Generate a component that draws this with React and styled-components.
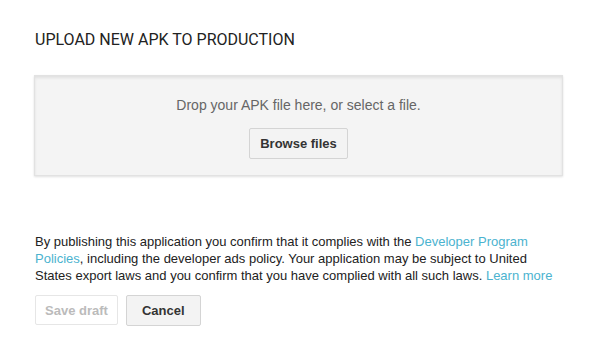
import styled, { createGlobalStyle } from "styled-components";

const GlobalStyle = createGlobalStyle`
  body {
    margin: 0;
    background: #fff;
    font-family: "Liberation Sans", Arial, sans-serif;
  }
`;

const Page = styled.div`
  width: 529px;
  padding: 30px 0 0 34px;
`;

const Title = styled.h2`
  margin: 0 0 26px 1px;
  font-family: Roboto, "Liberation Sans", sans-serif;
  font-weight: 400;
  font-size: 16px;
  line-height: 19px;
  color: #222;
`;

const DropZone = styled.div`
  height: 101px;
  box-sizing: border-box;
  background: #f4f4f4;
  border: 1px solid #e2e2e2;
  box-shadow: inset 0 2px 3px rgba(0, 0, 0, 0.08), 0 1px 2px rgba(0, 0, 0, 0.12);
  display: flex;
  flex-direction: column;
  align-items: center;
  padding-top: 21px;
  gap: 14px;
`;

const DropText = styled.div`
  font-size: 14px;
  line-height: 17px;
  color: #666;
`;

const Button = styled.button`
  height: ${(p) => p.h || 30}px;
  padding: 0 ${(p) => p.px || 10}px;
  font-family: "Liberation Sans", Arial, sans-serif;
  font-weight: 700;
  font-size: 13px;
  border-radius: 2px;
  color: ${(p) => (p.disabled ? "#bbb" : "#333")};
  background: ${(p) => (p.disabled ? "#fff" : "#f3f3f3")};
  border: 1px solid ${(p) => (p.disabled ? "#e6e6e6" : "#d4d4d4")};
  cursor: ${(p) => (p.disabled ? "default" : "pointer")};
`;

const Notice = styled.p`
  margin: 57px 0 0 1px;
  font-size: 13px;
  line-height: 17px;
  color: #222;
`;

const Link = styled.a`
  color: #4bb3cf;
  text-decoration: none;
`;

const Actions = styled.div`
  display: flex;
  gap: 8px;
  margin: 11px 0 0 1px;
`;

export default function App() {
  return (
    <>
      <GlobalStyle />
      <Page>
        <Title>UPLOAD NEW APK TO PRODUCTION</Title>
        <DropZone>
          <DropText>Drop your APK file here, or select a file.</DropText>
          <Button h={31} px={10}>Browse files</Button>
        </DropZone>
        <Notice>
          By publishing this application you confirm that it complies with the{" "}
          <Link href="#">Developer Program Policies</Link>, including the developer
          ads policy. Your application may be subject to United States export laws
          and you confirm that you have complied with all such laws.{" "}
          <Link href="#">Learn more</Link>
        </Notice>
        <Actions>
          <Button disabled h={30} px={9}>Save draft</Button>
          <Button h={31} px={15}>Cancel</Button>
        </Actions>
      </Page>
    </>
  );
}
